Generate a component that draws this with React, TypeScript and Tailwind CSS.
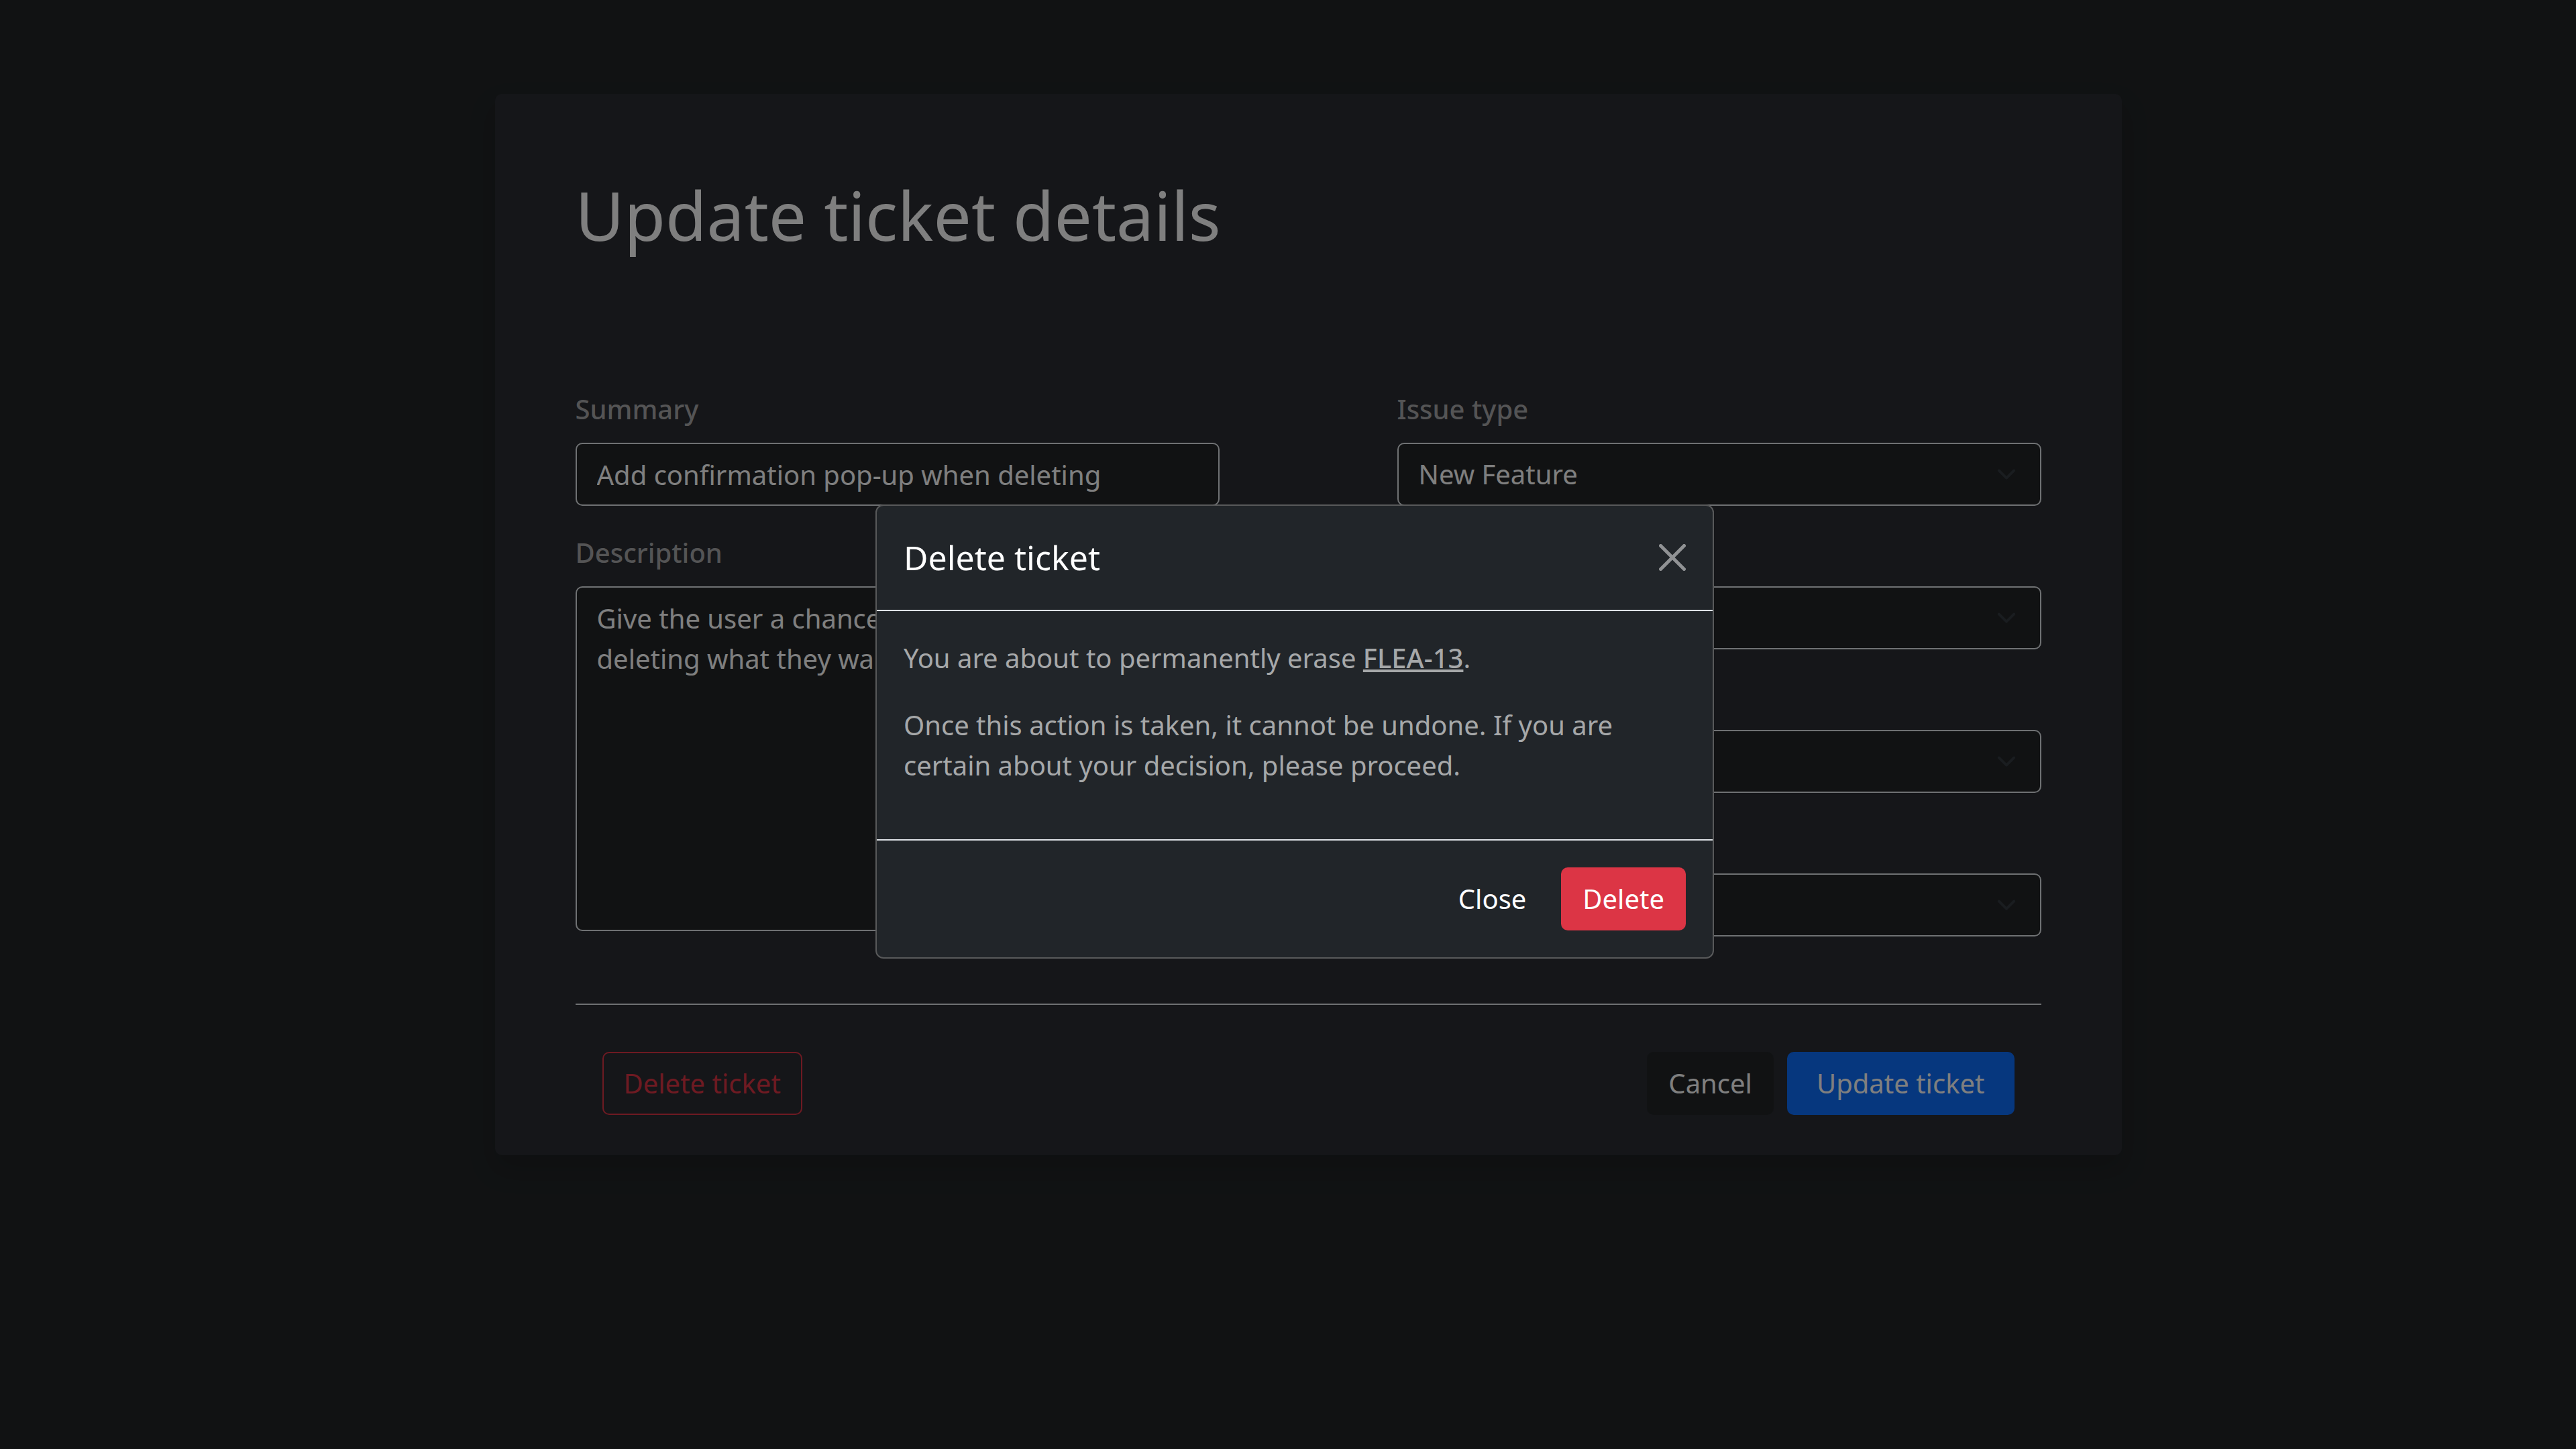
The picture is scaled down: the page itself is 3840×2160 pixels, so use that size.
import React from "react";

const fieldBox =
  "w-full rounded-[10px] border-2 border-[#dee2e6] bg-[#222527] px-[30px] text-[40px] leading-[60px] text-white outline-none";

const labelText = "text-[40px] font-medium leading-[60px] text-[#a9a9aa]";

const buttonBox = "rounded-[10px] border-2 py-[15px] text-[40px] leading-[60px]";

function SelectField({ id, label, value }: { id: string; label: string; value: string }) {
  return (
    <div className="flex flex-col gap-5">
      <label htmlFor={id} className={labelText}>
        {label}
      </label>
      <div className="relative">
        <select id={id} defaultValue={value} className={`${fieldBox} h-[94px] appearance-none`}>
          <option value={value}>{value}</option>
        </select>
        <svg
          viewBox="0 0 16 16"
          aria-hidden="true"
          className="pointer-events-none absolute inset-y-0 right-[37px] my-auto size-[30px]"
        >
          <path
            d="m2 5 6 6 6-6"
            fill="none"
            stroke="#343a40"
            strokeWidth="2"
            strokeLinecap="round"
            strokeLinejoin="round"
          />
        </svg>
      </div>
    </div>
  );
}

function TicketForm() {
  return (
    <main className="w-full max-w-[2425px] rounded-[10px] bg-[#2a2c32] px-[120px] pt-[120px] pb-[60px] shadow-[0_20px_40px_rgba(0,0,0,0.15)]">
      <h1 className="text-[100px] leading-[120px]">Update ticket details</h1>
      <form className="mt-[200px]" onSubmit={(e) => e.preventDefault()}>
        <div className="grid grid-cols-2 gap-x-[265px] border-b-2 border-[#dee2e6] pb-[100px]">
          <div className="flex flex-col gap-10">
            <div className="flex flex-col gap-5">
              <label htmlFor="summary" className={labelText}>
                Summary
              </label>
              <input
                id="summary"
                type="text"
                defaultValue="Add confirmation pop-up when deleting"
                className={`${fieldBox} h-[94px]`}
              />
            </div>
            <div className="flex flex-col gap-5">
              <label htmlFor="description" className={labelText}>
                Description
              </label>
              <textarea
                id="description"
                defaultValue="Give the user a chance to cancel before deleting what they want to keep."
                className={`${fieldBox} h-[514px] resize-none py-4`}
              />
            </div>
          </div>
          <div className="flex flex-col gap-10">
            <SelectField id="issue-type" label="Issue type" value="New Feature" />
            <SelectField id="status" label="Status" value="To do" />
            <SelectField id="priority" label="Priority" value="Medium" />
            <SelectField id="assignee" label="Assignee" value="None" />
          </div>
        </div>
        <div className="mt-[70px] flex justify-between px-10">
          <button type="button" className={`${buttonBox} border-[#dc3545] px-[30px] text-[#dc3545]`}>
            Delete ticket
          </button>
          <div className="flex gap-5">
            <button type="button" className={`${buttonBox} border-[#222527] bg-[#222527] px-[30px]`}>
              Cancel
            </button>
            <button type="submit" className={`${buttonBox} border-[#0d6efd] bg-[#0d6efd] px-[42px]`}>
              Update ticket
            </button>
          </div>
        </div>
      </form>
    </main>
  );
}

function DeleteDialog() {
  return (
    <div className="fixed inset-0 flex items-center justify-center bg-black/50 pt-5 pl-5">
      <div
        role="dialog"
        aria-modal="true"
        aria-labelledby="delete-title"
        className="w-full max-w-[1250px] rounded-[12px] border-2 border-[#58595a] bg-[#212529]"
      >
        <header className="flex items-center justify-between border-b-2 border-[#dee2e6] p-10">
          <h2 id="delete-title" className="text-[50px] leading-[75px]">
            Delete ticket
          </h2>
          <button type="button" aria-label="Close dialog" className="opacity-50">
            <svg viewBox="0 0 16 16" fill="#fff" aria-hidden="true" className="size-10">
              <path d="M.293.293a1 1 0 0 1 1.414 0L8 6.586 14.293.293a1 1 0 1 1 1.414 1.414L9.414 8l6.293 6.293a1 1 0 0 1-1.414 1.414L8 9.414l-6.293 6.293a1 1 0 0 1-1.414-1.414L6.586 8 .293 1.707a1 1 0 0 1 0-1.414z" />
            </svg>
          </button>
        </header>
        <div className="flex flex-col gap-10 px-10 pt-10 pb-20 text-[40px] leading-[60px] text-[#a6a8a9]">
          <p>
            You are about to permanently erase{" "}
            <a href="#flea-13" className="font-medium underline">
              FLEA-13
            </a>
            .
          </p>
          <p>
            Once this action is taken, it cannot be undone. If you are certain about your decision,
            please proceed.
          </p>
        </div>
        <footer className="flex justify-end gap-5 border-t-2 border-[#dee2e6] p-10">
          <button type="button" className={`${buttonBox} border-transparent px-[30px]`}>
            Close
          </button>
          <button type="button" className={`${buttonBox} border-[#dc3545] bg-[#dc3545] px-[30px]`}>
            Delete
          </button>
        </footer>
      </div>
    </div>
  );
}

export default function App() {
  return (
    <div className="flex min-h-screen items-start justify-center bg-[#222527] pt-[140px] pl-[60px] font-['Noto_Sans',sans-serif] text-white">
      <TicketForm />
      <DeleteDialog />
    </div>
  );
}
